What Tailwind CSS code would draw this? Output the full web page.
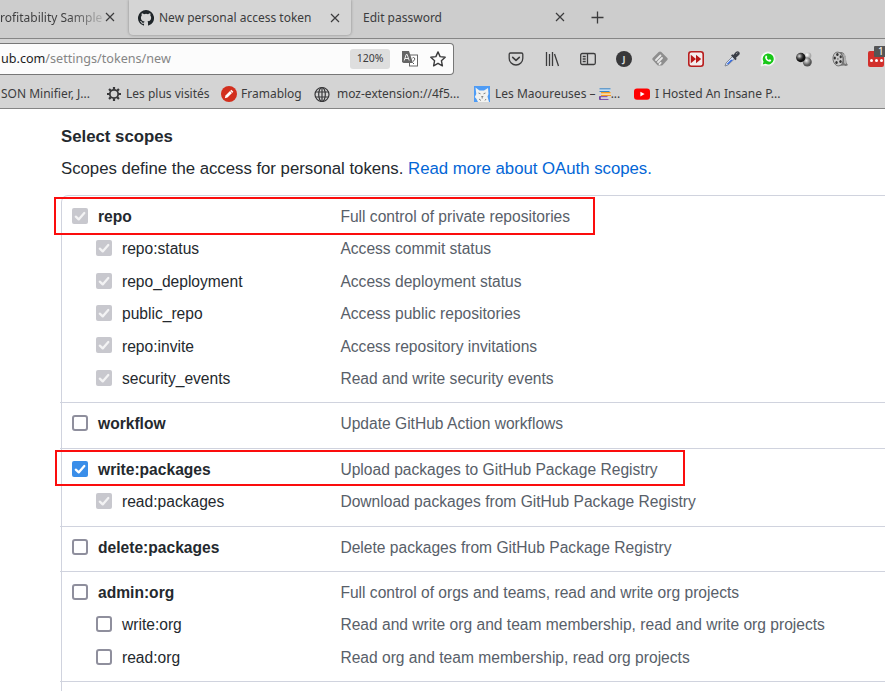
<!DOCTYPE html>
<html lang="en">
<head>
<meta charset="utf-8">
<title>New personal access token</title>
<script src="https://cdn.jsdelivr.net/npm/@tailwindcss/browser@4"></script>
</head>
<body class="w-[885px] h-[691px] overflow-hidden bg-white">
<svg class="hidden">
  <symbol id="close" viewBox="0 0 10 10"><path d="M1 1l8 8M9 1l-8 8" stroke="#3c3c3d" stroke-width="1.2" fill="none"/></symbol>
  <symbol id="check" viewBox="0 0 16 16"><path d="M3.800 8.700l2.900 2.700L12.300 5" stroke="currentColor" stroke-width="2.300" fill="none" stroke-linecap="round" stroke-linejoin="round"/></symbol>
</svg>
<div class="flex h-[691px] flex-col">
  <header class="h-[109px] shrink-0 border-b border-[#858585] bg-[#d4d4d4] font-['Noto_Sans',sans-serif] text-[12px] text-[#3c3c3d] whitespace-nowrap">
    <!-- tabs -->
    <div class="flex h-[39px] border-b border-[#868686] bg-[#cdcdcd]">
      <div class="flex w-[129px] items-center pb-1">
        <div class="w-[105px] bg-linear-to-r from-[#3c3c3d] from-65% to-[#bdbdbd] bg-clip-text pt-px text-transparent">rofitability Sample</div>
        <svg class="h-[10px] w-[10px]"><use href="#close"/></svg>
      </div>
      <div class="flex h-[35px] w-[222px] items-center rounded-b-[4px] bg-[#d5d5d5] pl-[9px] shadow-[0_0_3px_#888]">
        <svg class="h-4 w-4" viewBox="0 0 16 16" fill="#1f2529"><path d="M8 0a8 8 0 0 0-2.530 15.590c.4.070.55-.17.55-.38v-1.490c-2.010.37-2.530-.49-2.690-.94-.09-.23-.48-.94-.82-1.130-.28-.15-.68-.52-.01-.53.63-.01 1.080.58 1.230.82.72 1.210 1.870.87 2.330.66.07-.52.28-.87.51-1.070-1.780-.2-3.640-.89-3.640-3.950 0-.87.31-1.590.82-2.150-.08-.2-.36-1.020.08-2.120 0 0 .67-.21 2.200.82a7.600 7.600 0 0 1 4 0c1.530-1.040 2.200-.82 2.200-.82.44 1.100.16 1.920.08 2.120.51.56.82 1.270.82 2.150 0 3.070-1.870 3.750-3.650 3.950.29.25.54.73.54 1.480v2.200c0 .21.15.46.55.38A8 8 0 0 0 8 0"/></svg>
        <div class="ml-[5px] w-[171px] pt-px">New personal access token</div>
        <svg class="h-[10px] w-[10px]"><use href="#close"/></svg>
      </div>
      <div class="flex items-center pb-1 pl-3">
        <div class="w-[192px] pt-px">Edit password</div>
        <svg class="h-[10px] w-[10px]"><use href="#close"/></svg>
        <svg class="ml-[26px] h-[13px] w-[13px]" viewBox="0 0 13 13"><path d="M6.500 .5v12M.5 6.500h12" stroke="#3c3c3d" stroke-width="1.300"/></svg>
      </div>
    </div>
    <!-- address bar -->
    <div class="flex h-[40px] items-center">
      <div class="flex h-8 w-[454px] items-center rounded-r-[4px] border border-l-0 border-[#777] bg-[#fcfcfc] pl-px">
        <div class="w-[349px] pt-px text-[12.6px] text-[#858585]"><span class="text-[#1c1c1c]">ub.com</span>/settings/tokens/new</div>
        <div class="flex h-5 w-10 items-center justify-center rounded-[3px] bg-[#dedede] text-[10.5px]">120%</div>
        <svg class="ml-3 h-4 w-4" viewBox="0 0 16 16"><rect x="7.5" y="4" width="8" height="11" fill="#fff" stroke="#666"/><path d="M0 0h7l4 12H1.500L0 11z" fill="#666"/><path d="M2.200 9.500l2-6h1l2 6M3 7.500h3.500" fill="none" stroke="#eee"/><path d="M10.500 7q1-1 2 0t-1 3v.5M11.500 12v1" fill="none" stroke="#555"/></svg>
        <svg class="ml-3 h-4 w-4" viewBox="0 0 16 16"><path d="M8 .9l2.100 4.700 5.100.6-3.800 3.500 1 5.100L8 12.300l-4.400 2.500 1-5.100L.8 6.200l5.100-.6z" fill="none" stroke="#3c3c3d" stroke-width="1.400" stroke-linejoin="round"/></svg>
      </div>
      <div class="ml-[54px] flex items-center gap-5 *:shrink-0">
        <svg class="h-4 w-4" viewBox="0 0 16 16" fill="none" stroke="#3c3c3d" stroke-width="1.300" stroke-linecap="round" stroke-linejoin="round"><path d="M2.500 2h11q1.300 0 1.300 1.300v3.900a6.800 6.800 0 0 1-13.600 0V3.300Q1.200 2 2.500 2z"/><path d="M4.700 6.300L8 9.400l3.300-3.100" stroke-width="1.600"/></svg>
        <svg class="h-4 w-4" viewBox="0 0 16 16" fill="none" stroke="#3c3c3d" stroke-width="1.300"><path d="M2.500 1v14M5.500 3v12M8.500 1v14M10.500 3l4 12"/></svg>
        <svg class="h-4 w-4" viewBox="0 0 16 16" fill="none" stroke="#3c3c3d" stroke-width="1.300"><rect x=".7" y="2.500" width="14.600" height="11" rx="1.500"/><path d="M7.500 2.500v11M2.700 5.500h3M2.700 8h3M2.700 10.500h3"/></svg>
        <div class="flex h-4 w-4 items-center justify-center rounded-full bg-[#38383a] text-[9px] font-bold text-[#ddd]">J</div>
        <svg class="h-4 w-4" viewBox="0 0 16 16"><path d="M8 .5q.7 0 1.300.6l6 6q.8.9 0 1.800l-4.600 5q-.6.600-1.300.6H6.600q-.7 0-1.300-.6l-4.600-5q-.8-.9 0-1.800l6-6Q7.300.5 8 .5z" fill="#8e8e8e"/><path d="M4 9l4.500-4.500M6 11l4-4M7.500 13l1.200-1.200" stroke="#e8e8e8" stroke-width="1.800" stroke-linecap="round"/></svg>
        <svg class="h-4 w-4" viewBox="0 0 16 16"><rect x=".8" y=".8" width="14.400" height="14.400" rx="2.500" fill="#f4eded" stroke="#b81e1e" stroke-width="1.600"/><path d="M2.800 3.800L8 8l-5.200 4.200zM8 3.800L13.200 8 8 12.200z" fill="#b81818"/></svg>
        <svg class="h-4 w-4" viewBox="0 0 16 16"><path d="M1 15l1-3 6.500-6.500 2.200 2.200L4 14z" fill="#dce6f7" stroke="#6e7685" stroke-width=".8"/><path d="M2.500 13.300l4.500-4.500h2L4.200 13.300z" fill="#2862df"/><path d="M7 4.500l1.300-1.200 1 .7 2.500-3q2-1.500 3.400.1 1.200 1.500-.2 2.900l-3 2.800.6 1.200-1.200 1.200z" fill="#3b3f48"/><path d="M12 3l1.500-1.300" stroke="#999"/></svg>
        <svg class="h-4 w-4" viewBox="0 0 16 16"><path d="M1 15l1-3.900A6.900 6.900 0 1 1 4.900 14z" fill="#fff" stroke="#eee"/><path d="M2.700 13.400l.8-2.700a5.500 5.500 0 1 1 2 2z" fill="#18c718"/><path d="M5.600 4.800q.8-.7 1.200.1l.5 1.200-.6.9q.8 1.500 2.200 2.100l.8-.8 1.500.8q.2 1.300-1.100 1.700Q8 11 6.100 9 4.300 6.500 5.600 4.800z" fill="#fff"/></svg>
        <svg class="h-4 w-4" viewBox="0 0 16 16"><defs><radialGradient id="b1" cx=".35" cy=".35"><stop stop-color="#ddd"/><stop offset=".6" stop-color="#444"/><stop offset="1" stop-color="#111"/></radialGradient><radialGradient id="b2" cx=".35" cy=".35"><stop stop-color="#fff"/><stop offset="1" stop-color="#aaa"/></radialGradient><radialGradient id="b3" cx=".4" cy=".35"><stop stop-color="#eee"/><stop offset="1" stop-color="#555"/></radialGradient></defs><circle cx="12" cy="4.800" r="3.400" fill="url(#b2)"/><circle cx="11.300" cy="11" r="4.500" fill="url(#b3)"/><circle cx="4.800" cy="6.500" r="4.700" fill="url(#b1)"/></svg>
        <svg class="h-4 w-4" viewBox="0 0 16 16"><path d="M5 1h5q4 2 4 7.500 0 4 2 5.500-2 1.500-4 .5l-5 .5z" fill="#777"/><path d="M10.500 2.500q3 4 2 10M12 3q2.500 4 1.500 10" fill="none" stroke="#ccc" stroke-width=".7"/><ellipse cx="6" cy="8" rx="5" ry="7" fill="#c9c9c9" stroke="#666" stroke-width=".8" transform="rotate(-8 6 8)"/><g fill="#333"><ellipse cx="5.400" cy="3.600" rx="1.200" ry="1.500"/><ellipse cx="2.800" cy="7" rx="1.100" ry="1.500"/><ellipse cx="8.700" cy="5.800" rx="1.100" ry="1.500"/><ellipse cx="4.500" cy="11.500" rx="1.200" ry="1.500"/><ellipse cx="8.500" cy="10.600" rx="1.200" ry="1.500"/><circle cx="5.900" cy="7.900" r=".6"/></g></svg>
        <div class="relative h-4 w-4 rounded-[2px] bg-[#d2302c]">
          <div class="flex gap-[2px] pl-[2px] pt-[8px]"><i class="h-[3px] w-[3px] rounded-full bg-white"></i><i class="h-[3px] w-[3px] rounded-full bg-white"></i><i class="h-[3px] w-[3px] rounded-full bg-white"></i></div>
          <div class="absolute -top-[5px] left-[6px] h-[11px] w-[14px] rounded-[1px] bg-[#555] pl-[4px] text-[10px] leading-[11px] text-white">1</div>
        </div>
      </div>
    </div>
    <!-- bookmarks -->
    <div class="flex h-[29px] items-center text-[12px]">
      <div class="w-[106px] pl-px">SON Minifier, J...</div>
      <svg class="h-4 w-4" viewBox="0 0 16 16" fill="none" stroke="#38383a"><circle cx="8" cy="8" r="4.200" stroke-width="1.800"/><path d="M8 1v2.500M8 12.500V15M1 8h2.500M12.500 8H15M3.050 3.050l1.800 1.800M11.150 11.150l1.800 1.800M3.050 12.950l1.800-1.800M11.150 4.850l1.800-1.800" stroke-width="2.200"/></svg>
      <div class="ml-1 w-[95px]">Les plus visités</div>
      <svg class="h-4 w-4" viewBox="0 0 16 16"><circle cx="8" cy="8" r="8" fill="#d22f1e"/><path d="M3.800 12.200l.7-2.700 5.800-5.800 2 2-5.800 5.800z" fill="#fff"/><path d="M9.200 5l1.900 1.900" stroke="#d22f1e" stroke-width=".7"/></svg>
      <div class="ml-1 w-[73px]">Framablog</div>
      <svg class="h-4 w-4" viewBox="0 0 16 16" fill="none" stroke="#38383a" stroke-width="1.200"><circle cx="8" cy="8.500" r="7"/><ellipse cx="8" cy="8.500" rx="3.300" ry="7"/><path d="M8 1.500v14M1.500 6h13M1.500 11h13"/></svg>
      <div class="ml-[7px] w-[137px]">moz-extension://4f5...</div>
      <svg class="h-4 w-4" viewBox="0 0 16 16"><path d="M0 0h16v16H0z" fill="#4f9cf5"/><path d="M1.500 1.500l4 3h4.500L14 2l.5 6-1 2.500L15 16H4l-1.500-3L.8 11l1.500-3z" fill="#f2f2f0"/><path d="M4.500 7l2 .8M11.500 7l-2 .8M7.300 10.500h2M8.200 11v1.500M5 13l2 1.500M12 13l-1 1.500" stroke="#666" stroke-width=".8"/></svg>
      <div class="ml-[5px] flex w-[139px] items-center">Les Maoureuses –&nbsp;<svg class="h-3 w-3 shrink-0" viewBox="0 0 12 12"><path d="M1 1h10.500v2.500H1z" fill="#c5dcef"/><path d="M.5 .8h11M.5 3.500h10" stroke="#3a86c8"/><path d="M3 4.500h8.500V7.500H3z" fill="#fad9a4"/><path d="M2 4.700h9.500M2 7.500h10" stroke="#f5991f" stroke-width="1.200"/><path d="M.5 8.700h9V11H.5z" fill="#ddd"/><path d="M.5 8.700h8M.5 11.400h9" stroke="#7442a8"/><path d="M.9 8.500v3" stroke="#5b2d91" stroke-width="1.500"/></svg>...</div>
      <svg class="h-4 w-4" viewBox="0 0 16 16"><rect y="2.500" width="16" height="11.300" rx="3" fill="#f00"/><path d="M6.400 5.700l4.200 2.400-4.200 2.400z" fill="#fff"/></svg>
      <div class="ml-[5px]">I Hosted An Insane P...</div>
    </div>
  </header>
  <main class="relative flex-1 pl-[61px] font-['Liberation_Sans',Arial,sans-serif] text-[15.6px] text-[#24292e] whitespace-nowrap">
    <h2 class="pt-[16px] text-[16.8px] leading-6 font-bold">Select scopes</h2>
    <p class="mt-2 text-[16.8px] leading-6 tracking-[-0.02px]">Scopes define the access for personal tokens. <a class="text-[#0366d6]">Read more about OAuth scopes.</a></p>
    <div id="scopes" class="mt-[14px] h-[520px] rounded-tl-[7px] border-t border-l border-[#d0d3de]"></div>
    <div class="absolute left-[54px] top-[88px] h-[38px] w-[541px] border-2 border-[#fb0d0d]"></div>
    <div class="absolute left-[55px] top-[341px] h-[36px] w-[630px] border-2 border-[#fb0d0d]"></div>
  </main>
</div>
<script>
const groups = [
  [207, [['repo','Full control of private repositories','d'],['repo:status','Access commit status','d'],['repo_deployment','Access deployment status','d'],['public_repo','Access public repositories','d'],['repo:invite','Access repository invitations','d'],['security_events','Read and write security events','d']]],
  [46, [['workflow','Update GitHub Action workflows','']]],
  [78, [['write:packages','Upload packages to GitHub Package Registry','c'],['read:packages','Download packages from GitHub Package Registry','d']]],
  [45, [['delete:packages','Delete packages from GitHub Package Registry','']]],
  [110, [['admin:org','Full control of orgs and teams, read and write org projects',''],['write:org','Read and write org and team membership, read and write org projects',''],['read:org','Read org and team membership, read org projects','']]],
];
const box = {
  d: '<svg class="h-4 w-4 rounded-[2px] bg-[#c8c8ce] text-[#f3f3f4]"><use href="#check"/></svg>',
  c: '<svg class="h-4 w-4 rounded-[2px] bg-[#3a8ee9] text-white"><use href="#check"/></svg>',
  '': '<span class="h-4 w-4 rounded-[3px] border-2 border-[#8f8f9d]"></span>',
};
document.getElementById('scopes').innerHTML = groups.map(([h, rows]) =>
  `<section class="-ml-0.5 border-b border-[#d0d3de] pl-0.5 pt-[3.6px]" style="height:${h}px">` + rows.map(([n, d, s], i) =>
    `<div class="flex h-[32.4px] items-center"><div class="flex w-[278.4px] items-center gap-[10px] ${i ? 'pl-[34px]' : 'pl-[10px] font-bold'}">${box[s]}<span class="pt-[2px]">${n}</span></div><span class="pt-[2px] text-[#586069]">${d}</span></div>`).join('') + '</section>').join('');
</script>
</body>
</html>
